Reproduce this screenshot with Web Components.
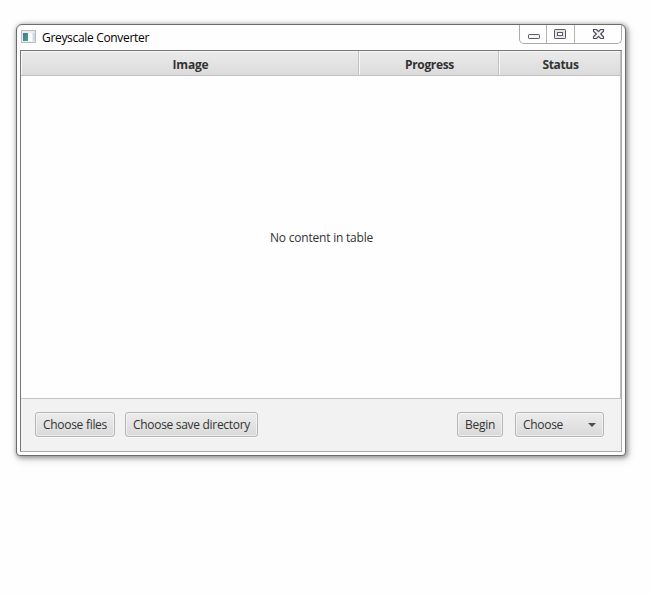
<!DOCTYPE html>
<html lang="en"><head><meta charset="utf-8"><title>Greyscale Converter</title>
<style>
html,body{margin:0;height:100%;background:#fefefe}
body{font:12px/16px "Open Sans","Noto Sans",sans-serif;color:#333;overflow:hidden}
app-window{margin:24px 0 0 16px}
</style></head><body>
<app-window>
  <fit-text slot="title" width="107">Greyscale Converter</fit-text>
  <window-controls slot="controls"></window-controls>
  <data-table>
    <table-column style="width:338px"><fit-text width="36">Image</fit-text></table-column>
    <table-column style="width:140px"><fit-text width="49">Progress</fit-text></table-column>
    <table-column style="width:121px"><fit-text width="36">Status</fit-text></table-column>
    <fit-text slot="placeholder" width="103">No content in table</fit-text>
  </data-table>
  <tool-bar>
    <push-button style="width:80px"><fit-text width="64">Choose files</fit-text></push-button>
    <push-button style="width:133px"><fit-text width="117">Choose save directory</fit-text></push-button>
    <push-button slot="end" style="width:46px"><fit-text width="30">Begin</fit-text></push-button>
    <push-button slot="end" menu style="width:89px"><fit-text width="40">Choose</fit-text></push-button>
  </tool-bar>
</app-window>
<script>
function define(name, html, init) {
  const template = document.createElement('template');
  template.innerHTML = html;
  customElements.define(name, class extends HTMLElement {
    constructor() {
      super();
      this.attachShadow({mode: 'open'}).append(template.content.cloneNode(true));
    }
    connectedCallback() { if (init) init(this); }
  });
}
define('app-window', `<style>
:host{display:flex;flex-direction:column;box-sizing:border-box;width:610px;height:432px;border:1px solid #6c6c6c;border-radius:6px 6px 4px 4px;background:#fefefe;padding:0 3px 3px;box-shadow:1px 1px 4px 1px #0005,2px 3px 9px 1px #0002}
header{height:25px;flex:none;display:flex;align-items:flex-start;color:#000}
svg{margin:5px 6px 0 1px;flex:none}
.title{padding-top:5px}
.controls{margin-left:auto}
main{flex:1;display:flex;flex-direction:column;border:1px solid #aaa;border-top-color:#777;border-left-color:#777}
</style><header>
<svg width="15" height="13" shape-rendering="crispEdges"><defs><linearGradient id="g" x2="1" y2="1"><stop stop-color="#3c74a0"/><stop offset="1" stop-color="#4fa878"/></linearGradient></defs><path fill="#b9bdc2" d="M0 0h15v13H0z"/><path fill="#e9edf0" d="M1 1h13v11H1z"/><path fill="#fff" d="M7 3h4v8H7z"/><path fill="url(#g)" d="M2 3h5v8H2z"/><path fill="#c9dde4" d="M12 3h2v4h-2z"/><path fill="#cde0cf" d="M12 7h2v4h-2z"/></svg>
<div class="title"><slot name="title"></slot></div><div class="controls"><slot name="controls"></slot></div></header><main><slot></slot></main>`);
define('window-controls', `<style>
:host{display:flex;box-sizing:border-box;width:103px;height:19px;border:1px solid #aaa;border-top:0;border-radius:0 0 5px 5px}
span{display:block;box-sizing:border-box;border-right:1px solid #b4b4b4;width:28px}
span:nth-child(2){width:27px}span:last-child{border:0;flex:1}
svg{display:block}
</style>
<span><svg width="27" height="18"><rect x="8.5" y="9.5" width="11" height="4" rx=".7" fill="#f4f4f4" stroke="#555968"/></svg></span>
<span><svg width="26" height="18"><rect x="7.5" y="4.5" width="11" height="9" rx=".7" fill="#e4e4e6" stroke="#555968"/><rect x="10.5" y="7.5" width="5" height="3" fill="#fff" stroke="#555968"/></svg></span>
<span><svg width="46" height="18"><path d="M18.5 4.5h3l2 2.2 2-2.2h3v1.7L25.7 9l2.8 2.8v1.7h-3l-2-2.2-2 2.2h-3v-1.7L21.3 9l-2.8-2.8z" fill="#f2f2f2" stroke="#4b4f60" stroke-width="1.2"/></svg></span>`);
define('data-table', `<style>
:host{display:flex;flex-direction:column;height:348px;box-sizing:border-box;border-right:1px solid #bbb;border-bottom:1px solid #c4c4c4;background:#fefefe}
.head{display:flex;height:25px;flex:none}
.body{flex:1;display:flex;align-items:center;justify-content:center;padding:2px 0 0 2px}
</style><div class="head"><slot></slot></div><div class="body"><slot name="placeholder"></slot></div>`);
define('table-column', `<style>
:host{display:flex;flex:none;box-sizing:border-box;height:25px;align-items:center;justify-content:center;padding:4px 0 0 2px;font-weight:bold;border-right:1px solid #c2c2c2;border-bottom:1px solid #c2c2c2;background:linear-gradient(#ebebeb,#e3e3e3 50%,#dbdbdb);box-shadow:inset 1px 1px #f7f7f7}
:host(:nth-of-type(3)){border-right:0}
</style><slot></slot>`);
define('tool-bar', `<style>
:host{display:flex;flex:1;align-items:flex-start;justify-content:space-between;background:#f2f2f2;padding:13px 17px 0 14px}
div{display:flex;gap:10px}div+div{gap:12px}
</style><div><slot></slot></div><div><slot name="end"></slot></div>`);
define('push-button', `<style>
:host{display:flex;align-items:center;justify-content:center;box-sizing:border-box;height:25px;border:1px solid #b5b5b5;border-radius:3px;background:linear-gradient(#ececec,#e3e3e3 50%,#d9d9d9);box-shadow:inset 0 0 0 1px #fff8,0 1px #fafafa;cursor:default}
:host([menu]){justify-content:space-between;padding:0 7px}
svg{display:none}:host([menu]) svg{display:block}
</style><slot></slot><svg width="8" height="4"><path d="M0 0h8L4 4z" fill="#4c4c4c"/></svg>`);
/* Label whose tracking is adjusted so that it takes the width given in its attribute. */
define('fit-text', `<style>:host{display:block;white-space:nowrap;width:max-content}</style><slot></slot>`, el => {
  const length = el.textContent.length;
  const target = +el.getAttribute('width');
  el.style.letterSpacing = (target - el.getBoundingClientRect().width) / length + 'px';
});
</script></body></html>
